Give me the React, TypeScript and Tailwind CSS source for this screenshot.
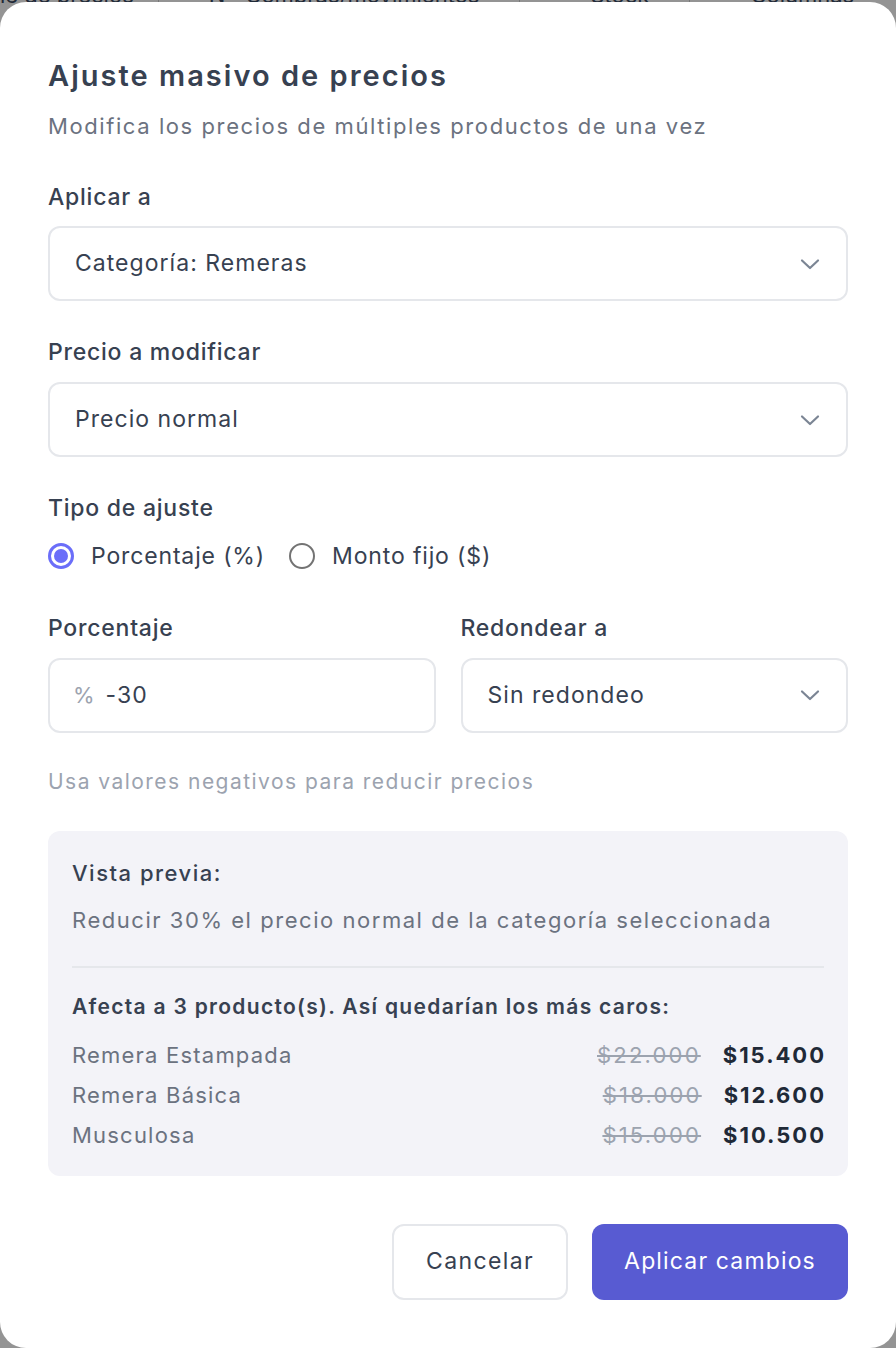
import React from "react";

const font = { fontFamily: "Inter, 'Noto Sans', sans-serif" };

function Chevron() {
  return (
    <svg width="24" height="24" viewBox="0 0 24 24" fill="none" stroke="#7b8594" strokeWidth="2.2" strokeLinecap="round" strokeLinejoin="round">
      <path d="M4 8.5l8 7.5 8-7.5" />
    </svg>
  );
}

function Select({ value }: { value: string }) {
  return (
    <div className="flex h-[75px] items-center justify-between rounded-[12px] border-2 border-[#e5e7eb] bg-white pl-[25px] pr-[24px]">
      <span className="text-[23px] tracking-[0.045em] text-[#374151]">{value}</span>
      <Chevron />
    </div>
  );
}

function Label({ children }: { children: React.ReactNode }) {
  return <div className="text-[23px] font-medium leading-[32px] tracking-[0.033em] text-[#374151]">{children}</div>;
}

const rows = [
  { name: "Remera Estampada", old: "$22.000", nw: "$15.400" },
  { name: "Remera Básica", old: "$18.000", nw: "$12.600" },
  { name: "Musculosa", old: "$15.000", nw: "$10.500" },
];

export default function App() {
  return (
    <div className="relative h-[1348px] w-[896px] overflow-hidden bg-[#949494]" style={font}>
      <div className="absolute left-0 top-[-17px] flex h-[24px] w-full items-center text-[22px] text-[#1f2937]">
        <span>le de precios</span>
        <span className="ml-[24px] h-full w-[1px] bg-[#777]" />
        <span className="ml-[50px]">N</span>
        <span className="ml-[20px]">Compras/movimientos</span>
        <span className="ml-[40px] h-full w-[1px] bg-[#777]" />
        <span className="ml-[70px]">Stock</span>
        <span className="ml-[40px] h-full w-[1px] bg-[#777]" />
        <span className="ml-[60px]">Columnas</span>
      </div>
      <div className="relative mt-[2px] flex h-[1346px] flex-col rounded-[26px] bg-white px-[48px] pt-[52px]">
        <h1 className="text-[29px] font-semibold leading-[44px] tracking-[0.07em] text-[#374151]">Ajuste masivo de precios</h1>
        <p className="mt-[12px] text-[22px] leading-[32px] tracking-[0.072em] text-[#6b7280]">Modifica los precios de múltiples productos de una vez</p>

        <div className="mt-[39px]">
          <Label>Aplicar a</Label>
          <div className="mt-[13px]">
            <Select value="Categoría: Remeras" />
          </div>
        </div>

        <div className="mt-[35px]">
          <Label>Precio a modificar</Label>
          <div className="mt-[14px]">
            <Select value="Precio normal" />
          </div>
        </div>

        <div className="mt-[35px]">
          <Label>Tipo de ajuste</Label>
          <div className="mt-[15px] flex items-center">
            <span className="flex h-[26px] w-[26px] items-center justify-center rounded-full border-[3px] border-[#6b6ef9]">
              <span className="h-[14px] w-[14px] rounded-full bg-[#6b6ef9]" />
            </span>
            <span className="ml-[17px] text-[23px] tracking-[0.037em] text-[#374151]">Porcentaje (%)</span>
            <span className="ml-[24px] h-[26px] w-[26px] rounded-full border-2 border-[#737373]" />
            <span className="ml-[17px] text-[23px] tracking-[0.037em] text-[#374151]">Monto fijo ($)</span>
          </div>
        </div>

        <div className="mt-[38px] grid grid-cols-2 gap-[25px]">
          <div>
            <Label>Porcentaje</Label>
            <div className="mt-[14px] flex h-[75px] items-center rounded-[12px] border-2 border-[#e5e7eb] bg-white pl-[23px]">
              <span className="text-[22px] text-[#9ca3af]">%</span>
              <span className="ml-[11px] text-[23px] tracking-[0.045em] text-[#374151]">-30</span>
            </div>
          </div>
          <div>
            <Label>Redondear a</Label>
            <div className="mt-[14px]">
              <Select value="Sin redondeo" />
            </div>
          </div>
        </div>

        <p className="mt-[35px] text-[21px] leading-[28px] tracking-[0.07em] text-[#9ca3af]">Usa valores negativos para reducir precios</p>

        <div className="mt-[35px] rounded-[12px] bg-[#f3f3f8] px-[24px] pb-[26px] pt-[26px]">
          <div className="text-[22px] font-medium leading-[32px] tracking-[0.068em] text-[#374151]">Vista previa:</div>
          <div className="mt-[15px] text-[22px] leading-[32px] tracking-[0.07em] text-[#6b7280]">Reducir 30% el precio normal de la categoría seleccionada</div>
          <div className="mt-[30px] h-[2px] bg-[#e5e7eb]" />
          <div className="mt-[24px] text-[21px] font-semibold leading-[30px] tracking-[0.062em] text-[#374151]">Afecta a 3 producto(s). Así quedarían los más caros:</div>
          <div className="mt-[18px] flex flex-col gap-[10px]">
            {rows.map((r) => (
              <div key={r.name} className="flex items-center justify-between leading-[30px]">
                <span className="text-[22px] tracking-[0.055em] text-[#6b7280]">{r.name}</span>
                <span className="flex items-center">
                  <span className="text-[22px] tracking-[0.1em] text-[#9ca3af] line-through">{r.old}</span>
                  <span className="ml-[22px] text-[22px] font-bold tracking-[0.09em] text-[#1f2937] [margin-right:-0.09em]">{r.nw}</span>
                </span>
              </div>
            ))}
          </div>
        </div>

        <div className="mt-[48px] flex justify-end gap-[24px]">
          <button className="h-[76px] w-[176px] rounded-[12px] border-2 border-[#e5e7eb] bg-white text-[23px] tracking-[0.06em] text-[#374151]">Cancelar</button>
          <button className="h-[76px] w-[256px] rounded-[12px] bg-[#585bd2] text-[23px] tracking-[0.05em] text-white">Aplicar cambios</button>
        </div>
      </div>
    </div>
  );
}
